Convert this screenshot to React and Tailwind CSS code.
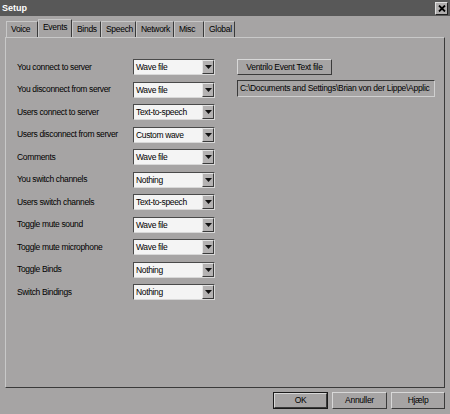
import React from 'react';

const ROWS = [
  ['You connect to server', 'Wave file'],
  ['You disconnect from server', 'Wave file'],
  ['Users connect to server', 'Text-to-speech'],
  ['Users disconnect from server', 'Custom wave'],
  ['Comments', 'Wave file'],
  ['You switch channels', 'Nothing'],
  ['Users switch channels', 'Text-to-speech'],
  ['Toggle mute sound', 'Wave file'],
  ['Toggle mute microphone', 'Wave file'],
  ['Toggle Binds', 'Nothing'],
  ['Switch Bindings', 'Nothing'],
];

const TABS = [
  { label: 'Voice', w: 'w-[32px]' },
  { label: 'Events', w: 'w-[34px]' },
  { label: 'Binds', w: 'w-[29px]' },
  { label: 'Speech', w: 'w-[35px]' },
  { label: 'Network', w: 'w-[38px]' },
  { label: 'Misc', w: 'w-[30px]' },
  { label: 'Global', w: 'w-[31px]' },
];

function Combo({ value }) {
  return (
    <div className="flex h-[16px] w-[82px] border border-t-[#4a4a4a] border-l-[#4a4a4a] border-b-[#d8d8d8] border-r-[#d8d8d8] bg-[#f4f4f4]">
      <div className="flex-1 whitespace-nowrap pl-[2px] text-[8.5px] leading-[14px] tracking-[-0.35px] text-black">{value}</div>
      <div className="flex w-[12px] items-center justify-center border border-t-[#e4e4e4] border-l-[#e4e4e4] border-b-[#3a3a3a] border-r-[#3a3a3a] bg-[#b4b2b2]">
        <svg width="7" height="4" viewBox="0 0 7 4">
          <path d="M0 0h7L3.5 4z" fill="#111" />
        </svg>
      </div>
    </div>
  );
}

function Button({ children, isDefault, className = '' }) {
  return (
    <div className={`${isDefault ? 'border border-[#1a1a1a]' : ''} ${className}`}>
      <div className="flex h-full items-center justify-center whitespace-nowrap border border-t-[#d8d8d8] border-l-[#d8d8d8] border-b-[#3a3a3a] border-r-[#3a3a3a] text-[8.5px] tracking-[-0.3px] text-black">
        {children}
      </div>
    </div>
  );
}

export default function App() {
  return (
    <div
      className="flex h-[414px] w-[450px] flex-col overflow-hidden bg-[#a6a4a4]"
      style={{ fontFamily: '"Liberation Sans", Arial, sans-serif' }}
    >
      {/* title bar */}
      <div className="flex h-[16px] items-center justify-between bg-[#585858] pl-[2px] pr-[2px]">
        <span className="text-[9px] font-bold leading-none text-white">Setup</span>
        <div className="flex h-[13px] w-[13px] items-center justify-center border border-t-[#e0e0e0] border-l-[#e0e0e0] border-b-[#202020] border-r-[#202020] bg-[#b0aeae]">
          <svg width="8" height="7" viewBox="0 0 8 7">
            <path d="M1 0.5L7 6.5M7 0.5L1 6.5" stroke="#000" strokeWidth="1.8" />
          </svg>
        </div>
      </div>

      {/* tabs */}
      <div className="mt-[5px] flex h-[16px] items-end pl-[6px]">
        {TABS.map(({ label, w }) => {
          const active = label === 'Events';
          return (
            <div
              key={label}
              className={`flex items-center whitespace-nowrap border-t border-l border-r border-t-[#c8c8c8] border-l-[#c8c8c8] border-r-[#3a3a3a] pl-[4px] text-[8.5px] tracking-[-0.3px] text-black ${w} ${
                active ? '-mb-px h-[19px] bg-[#a6a4a4] pb-[3px]' : 'h-[16px]'
              }`}
            >
              {label}
            </div>
          );
        })}
      </div>

      {/* panel */}
      <div className="mx-[5px] flex h-[351px] border border-t-[#c8c8c8] border-l-[#c8c8c8] border-b-[#3a3a3a] border-r-[#3a3a3a] pl-[11px] pt-[21px]">
        <div className="flex flex-col gap-[6.5px]">
          {ROWS.map(([label, value]) => (
            <div key={label} className="flex h-[16px] items-center">
              <div className="w-[116px] whitespace-nowrap text-[8.5px] tracking-[-0.35px] text-black">{label}</div>
              <Combo value={value} />
            </div>
          ))}
        </div>
        <div className="ml-[22px] flex flex-col">
          <Button className="h-[16px] w-[95px]">Ventrilo Event Text file</Button>
          <div className="mt-[5px] flex h-[17px] w-[198px] items-center overflow-hidden whitespace-nowrap border border-t-[#3a3a3a] border-l-[#3a3a3a] border-b-[#d0d0d0] border-r-[#d0d0d0] pl-[2px] text-[8.5px] tracking-[-0.3px] text-black">
            C:\Documents and Settings\Brian von der Lippe\Applic
          </div>
        </div>
      </div>

      {/* buttons */}
      <div className="mt-[4px] flex justify-end gap-[4px] pr-[5px]">
        <Button isDefault className="h-[17px] w-[55px]">OK</Button>
        <Button className="h-[17px] w-[55px]">Annuller</Button>
        <Button className="h-[17px] w-[54px]">Hjælp</Button>
      </div>
    </div>
  );
}
